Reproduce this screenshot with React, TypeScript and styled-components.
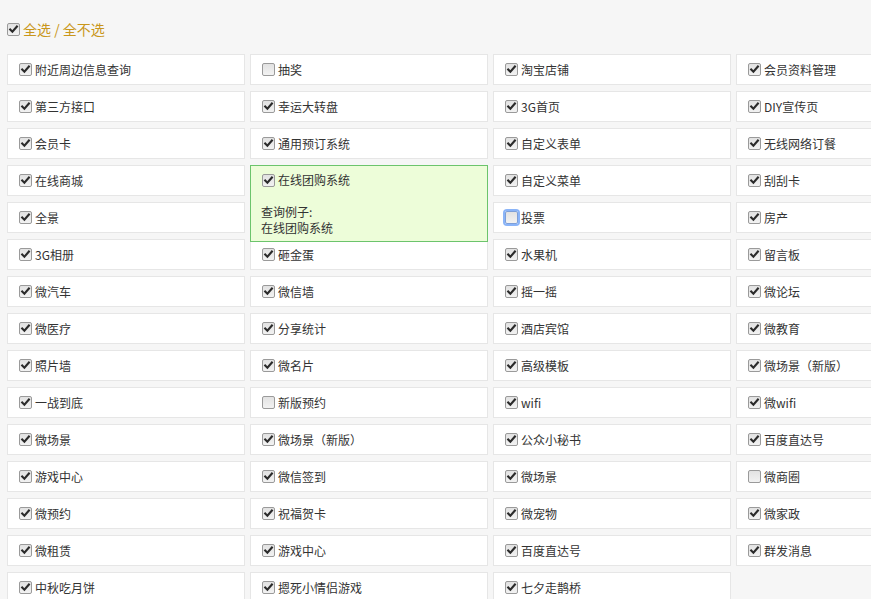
import React from "react";
import styled, { createGlobalStyle, css } from "styled-components";

const Global = createGlobalStyle`
  html, body { margin: 0; padding: 0; overflow: hidden; background: #f6f6f6; }
  body { font-family: "Noto Sans CJK SC", "Microsoft YaHei", sans-serif; color: #333; }
`;

const Page = styled.div`
  padding: 22px 7px 0 7px;
`;

const Header = styled.div`
  display: flex;
  align-items: center;
  height: 14px;
  gap: 3px;
  margin-bottom: 18px;
  font-size: 14px;
  color: #c9961a;
`;

const HeaderLink = styled.span`
  color: #c9961a;
  white-space: pre;
`;

const Grid = styled.div`
  display: grid;
  grid-template-columns: repeat(4, 238px);
  grid-auto-rows: 31px;
  column-gap: 5px;
  row-gap: 6px;
  width: 967px;
`;

const Cell = styled.div`
  position: relative;
  box-sizing: border-box;
  background: #fff;
  border: 1px solid #e6e6e6;
  display: flex;
  align-items: center;
  padding: 0 10px;
  font-size: 12px;
  white-space: nowrap;
`;

const Label = styled.span`
  margin-left: 3px;
  line-height: 16px;
`;

const Box = styled.span<{ $focus?: boolean; $flush?: boolean }>`
  box-sizing: border-box;
  width: 13px;
  height: 13px;
  margin-left: ${(p) => (p.$flush ? 0 : 1)}px;
  flex: none;
  border: 1px solid #9a9a9a;
  border-radius: 2px;
  background: linear-gradient(#e2e2e2, #f2f2f2);
  display: inline-flex;
  align-items: center;
  justify-content: center;
  ${(p) =>
    p.$focus &&
    css`
      box-shadow: 0 0 0 2px #8ab4f8;
      border-color: #7d9fd8;
    `}
`;

const Tip = styled.div`
  position: absolute;
  top: -1px;
  left: -1px;
  z-index: 2;
  box-sizing: border-box;
  width: 238px;
  height: 77px;
  background: #edfdd9;
  border: 1px solid #6cc46c;
  padding: 6px 10px 5px 10px;
  font-size: 12px;
  line-height: 16px;
  color: #333;
`;

const TipRow = styled.div`
  display: flex;
  align-items: center;
  height: 16px;
`;

const TipLine = styled.div`
  height: 16px;
`;

const Check = ({
  checked = true,
  focus = false,
  flush = false,
}: {
  checked?: boolean;
  focus?: boolean;
  flush?: boolean;
}) => (
  <Box $focus={focus} $flush={flush}>
    {checked && (
      <svg width="11" height="11" viewBox="0 0 11 11">
        <path d="M2.2 5.6 L4.4 7.8 L8.9 2.6" fill="none" stroke="#2b2b2b" strokeWidth="2.1" strokeLinecap="square" />
      </svg>
    )}
  </Box>
);

type Item = { t: string; c?: boolean; f?: boolean; tip?: boolean };

const items: Item[] = [
  { t: "附近周边信息查询" }, { t: "抽奖", c: false }, { t: "淘宝店铺" }, { t: "会员资料管理" },
  { t: "第三方接口" }, { t: "幸运大转盘" }, { t: "3G首页" }, { t: "DIY宣传页" },
  { t: "会员卡" }, { t: "通用预订系统" }, { t: "自定义表单" }, { t: "无线网络订餐" },
  { t: "在线商城" }, { t: "在线团购系统", tip: true }, { t: "自定义菜单" }, { t: "刮刮卡" },
  { t: "全景" }, { t: "" }, { t: "投票", c: false, f: true }, { t: "房产" },
  { t: "3G相册" }, { t: "砸金蛋" }, { t: "水果机" }, { t: "留言板" },
  { t: "微汽车" }, { t: "微信墙" }, { t: "摇一摇" }, { t: "微论坛" },
  { t: "微医疗" }, { t: "分享统计" }, { t: "酒店宾馆" }, { t: "微教育" },
  { t: "照片墙" }, { t: "微名片" }, { t: "高级模板" }, { t: "微场景（新版）" },
  { t: "一战到底" }, { t: "新版预约", c: false }, { t: "wifi" }, { t: "微wifi" },
  { t: "微场景" }, { t: "微场景（新版）" }, { t: "公众小秘书" }, { t: "百度直达号" },
  { t: "游戏中心" }, { t: "微信签到" }, { t: "微场景" }, { t: "微商圈", c: false },
  { t: "微预约" }, { t: "祝福贺卡" }, { t: "微宠物" }, { t: "微家政" },
  { t: "微租赁" }, { t: "游戏中心" }, { t: "百度直达号" }, { t: "群发消息" },
  { t: "中秋吃月饼" }, { t: "摁死小情侣游戏" }, { t: "七夕走鹊桥" },
];

export default function App() {
  return (
    <Page>
      <Global />
      <Header>
        <Check flush />
        <HeaderLink>全选 / 全不选</HeaderLink>
      </Header>
      <Grid>
        {items.map((it, i) => (
          <Cell key={i}>
            <Check checked={it.c !== false} focus={it.f} />
            {it.t && <Label>{it.t}</Label>}
            {it.tip && (
              <Tip>
                <TipRow>
                  <Check />
                  <Label>{it.t}</Label>
                </TipRow>
                <TipLine />
                <TipLine>查询例子:</TipLine>
                <TipLine>{it.t}</TipLine>
              </Tip>
            )}
          </Cell>
        ))}
      </Grid>
    </Page>
  );
}
